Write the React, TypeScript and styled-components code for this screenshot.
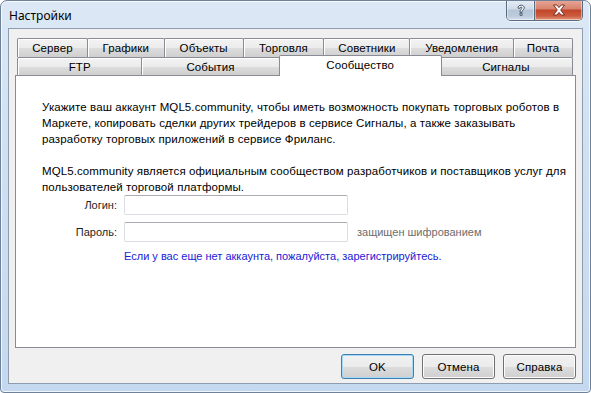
import React from 'react';
import styled, { createGlobalStyle, css } from 'styled-components';

const GlobalStyle = createGlobalStyle`
  html, body {
    margin: 0;
    padding: 0;
    background: #ffffff;
  }
  body {
    font-family: "Liberation Sans", Arial, sans-serif;
    font-size: 11.5px;
    letter-spacing: 0.1px;
    color: #000;
  }
`;

const Window = styled.div`
  box-sizing: border-box;
  width: 591px;
  height: 393px;
  display: flex;
  flex-direction: column;
  border: 1px solid #6f8198;
  border-radius: 7px 7px 4px 4px;
  background: linear-gradient(180deg, #dce8f5 0%, #cfe0f2 40%, #c4d8ef 100%);
  box-shadow: inset 0 0 0 1px rgba(255, 255, 255, 0.75);
  overflow: hidden;
`;

const TitleBar = styled.div`
  height: 27px;
  display: flex;
  align-items: flex-start;
  justify-content: space-between;
  padding: 0 6px 0 8px;
  flex-shrink: 0;
`;

const Title = styled.div`
  font-family: "Noto Sans", "Open Sans", sans-serif;
  font-size: 12px;
  letter-spacing: 0;
  line-height: 14px;
  margin-top: 8px;
  color: #000;
`;

const CaptionButtons = styled.div`
  display: flex;
  margin-top: -1px;
  margin-right: 1px;
  border: 1px solid #5a6b80;
  border-top: none;
  border-radius: 0 0 5px 5px;
  overflow: hidden;
  box-shadow: 0 1px 0 rgba(255, 255, 255, 0.7);
`;

const CaptionButton = styled.div<{ $close?: boolean }>`
  width: ${({ $close }) => ($close ? 47 : 27)}px;
  height: 20px;
  display: flex;
  align-items: center;
  justify-content: center;
  box-shadow: inset 0 0 0 1px rgba(255, 255, 255, 0.45);
  background: ${({ $close }) =>
    $close
      ? 'linear-gradient(180deg, #e8a99a 0%, #d7826c 45%, #c1442a 50%, #cc5c3f 80%, #e29a7f 100%)'
      : 'linear-gradient(180deg, #e5edf6 0%, #cfdbe8 45%, #b5c6d9 50%, #bccbdc 80%, #d5e1ee 100%)'};
  & + & {
    border-left: 1px solid #5a6b80;
  }
`;

const Client = styled.div`
  flex: 1;
  margin: 0 7px 8px 7px;
  border: 1px solid #8e9cae;
  background: #f0f0f0;
  display: flex;
  flex-direction: column;
  padding: 9px 6px 4px 6px;
`;

const TabStrip = styled.div`
  display: flex;
  flex-direction: column;
  padding: 0 3px 0 2px;
`;

const TabRow = styled.div<{ $h: number }>`
  display: flex;
  height: ${({ $h }) => $h}px;
  align-items: flex-end;
`;

const Tab = styled.div<{ $w: number; $active?: boolean }>`
  box-sizing: border-box;
  width: ${({ $w }) => $w}px;
  height: 100%;
  border: 1px solid #898c95;
  border-bottom: none;
  border-radius: 2px 2px 0 0;
  background: linear-gradient(180deg, #f3f3f3 0%, #ebebeb 50%, #dddddd 51%, #cfcfcf 100%);
  box-shadow: inset 1px 1px 0 #ffffff;
  display: flex;
  align-items: center;
  justify-content: center;
  line-height: 13px;
  padding-top: 1px;
  color: #000;
  & + & {
    margin-left: -1px;
  }
  ${({ $active, $w }) =>
    $active &&
    css`
      position: relative;
      z-index: 1;
      width: ${$w + 4}px;
      height: calc(100% + 3px);
      margin: -2px -2px -1px -3px;
      background: #ffffff;
      box-shadow: none;
      align-items: flex-start;
      padding-top: 3px;
      & + * {
        margin-left: 0;
      }
    `}
`;

const Panel = styled.div`
  flex: 1;
  background: #ffffff;
  border: 1px solid #898c95;
  padding: 23px 10px 0 26px;
  display: flex;
  flex-direction: column;
`;

const Paragraph = styled.p<{ $gap?: number }>`
  margin: 0 0 ${({ $gap }) => $gap ?? 0}px 0;
  line-height: 16px;
  white-space: nowrap;
`;

const Form = styled.div`
  display: grid;
  grid-template-columns: 75px 224px auto;
  column-gap: 7px;
  row-gap: 7px;
  align-items: center;
  font-size: 11px;
  letter-spacing: 0;
`;

const Label = styled.label`
  text-align: right;
  color: #1e1e1e;
`;

const Input = styled.div`
  box-sizing: border-box;
  height: 20px;
  border: 1px solid #dadde3;
  border-top-color: #abadb3;
  border-radius: 2px;
  background: #fff;
`;

const Hint = styled.span`
  color: #6d6d6d;
  padding-left: 2px;
`;

const Link = styled.a`
  grid-column: 2 / 4;
  color: #1a1ad6;
  text-decoration: none;
  line-height: 14px;
`;

const ButtonBar = styled.div`
  display: flex;
  justify-content: flex-end;
  gap: 8px;
  margin-top: 6px;
`;

const Button = styled.button<{ $default?: boolean }>`
  box-sizing: border-box;
  width: 73px;
  height: 25px;
  font-family: "Liberation Sans", Arial, sans-serif;
  font-size: 11.5px;
  letter-spacing: 0.1px;
  color: #000;
  border: 1px solid ${({ $default }) => ($default ? '#3c7fb1' : '#707070')};
  border-radius: 3px;
  background: linear-gradient(180deg, #f2f2f2 0%, #ebebeb 50%, #dddddd 51%, #cfcfcf 100%);
  box-shadow: inset 0 0 0 1px ${({ $default }) => ($default ? '#a6d8f8' : '#fcfcfc')};
  padding: 0;
`;

const rows1 = [
  { t: 'Сервер', w: 71 },
  { t: 'Графики', w: 78 },
  { t: 'Объекты', w: 80 },
  { t: 'Торговля', w: 82 },
  { t: 'Советники', w: 87 },
  { t: 'Уведомления', w: 105 },
  { t: 'Почта', w: 60 },
];

const rows2 = [
  { t: 'FTP', w: 126 },
  { t: 'События', w: 139 },
  { t: 'Сообщество', w: 160, active: true },
  { t: 'Сигналы', w: 135 },
];

const HelpGlyph = () => (
  <svg width="12" height="13" viewBox="0 0 12 13">
    <path
      d="M3 4.2 C3 2 4.5 1.2 6.2 1.2 C8 1.2 9.3 2.3 9.3 3.9 C9.3 5.6 7.4 6 7.1 7.3 L7.1 8.2 L5 8.2 L5 7 C5.3 5.3 7.1 5 7.1 4 C7.1 3.4 6.7 3 6.1 3 C5.5 3 5.1 3.4 5.1 4.2 Z M5 9.2 L7.1 9.2 L7.1 11.3 L5 11.3 Z"
      fill="#ffffff"
      stroke="#3b4a5c"
      strokeWidth="0.9"
    />
  </svg>
);

const CloseGlyph = () => (
  <svg width="14" height="12" viewBox="0 0 14 12">
    <path
      d="M1.5 1 L4.8 1 L7 3.6 L9.2 1 L12.5 1 L8.7 6 L12.5 11 L9.2 11 L7 8.4 L4.8 11 L1.5 11 L5.3 6 Z"
      fill="#ffffff"
      stroke="#6b2418"
      strokeWidth="0.9"
      strokeLinejoin="round"
    />
  </svg>
);

const App: React.FC = () => {
  return (
    <>
      <GlobalStyle />
      <Window>
        <TitleBar>
          <Title>Настройки</Title>
          <CaptionButtons>
            <CaptionButton>
              <HelpGlyph />
            </CaptionButton>
            <CaptionButton $close>
              <CloseGlyph />
            </CaptionButton>
          </CaptionButtons>
        </TitleBar>
        <Client>
          <TabStrip>
            <TabRow $h={19}>
              {rows1.map((r) => (
                <Tab key={r.t} $w={r.w}>
                  {r.t}
                </Tab>
              ))}
            </TabRow>
            <TabRow $h={18}>
              {rows2.map((r) => (
                <Tab key={r.t} $w={r.w} $active={r.active}>
                  {r.t}
                </Tab>
              ))}
            </TabRow>
          </TabStrip>
          <Panel>
            <Paragraph $gap={16}>
              Укажите ваш аккаунт MQL5.community, чтобы иметь возможность покупать торговых роботов в
              <br />
              Маркете, копировать сделки других трейдеров в сервисе Сигналы, а также заказывать
              <br />
              разработку торговых приложений в сервисе Фриланс.
            </Paragraph>
            <Paragraph>
              MQL5.community является официальным сообществом разработчиков и поставщиков услуг для
              <br />
              пользователей торговой платформы.
            </Paragraph>
            <Form>
              <Label>Логин:</Label>
              <Input />
              <span />
              <Label>Пароль:</Label>
              <Input />
              <Hint>защищен шифрованием</Hint>
              <span />
              <Link href="#">Если у вас еще нет аккаунта, пожалуйста, зарегистрируйтесь.</Link>
            </Form>
          </Panel>
          <ButtonBar>
            <Button $default>OK</Button>
            <Button>Отмена</Button>
            <Button>Справка</Button>
          </ButtonBar>
        </Client>
      </Window>
    </>
  );
};

export default App;
